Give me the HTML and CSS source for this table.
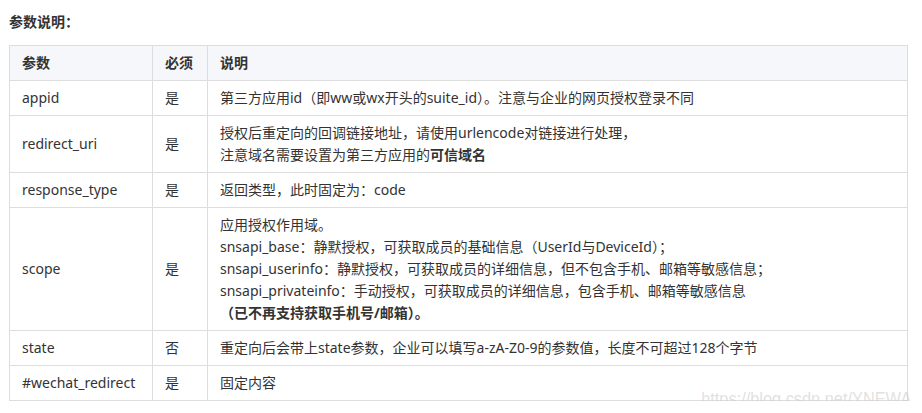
FILE: index.html
```html
<!DOCTYPE html>
<html lang="zh-CN">
<head>
<meta charset="utf-8">
<link rel="stylesheet" href="styles.css">
</head>
<body>
<div class="page">
  <p class="title">参数说明：</p>
  <div class="table-wrap">
    <table class="params">
      <colgroup>
        <col class="c1"><col class="c2"><col class="c3">
      </colgroup>
      <thead>
        <tr><th>参数</th><th>必须</th><th>说明</th></tr>
      </thead>
      <tbody>
        <tr><td>appid</td><td>是</td><td>第三方应用id（即ww或wx开头的suite_id）。注意与企业的网页授权登录不同</td></tr>
        <tr><td>redirect_uri</td><td>是</td><td>授权后重定向的回调链接地址，请使用urlencode对链接进行处理，<br>注意域名需要设置为第三方应用的<b>可信域名</b></td></tr>
        <tr><td>response_type</td><td>是</td><td>返回类型，此时固定为：code</td></tr>
        <tr><td>scope</td><td>是</td><td>应用授权作用域。<br>snsapi_base：静默授权，可获取成员的基础信息（UserId与DeviceId）；<br>snsapi_userinfo：静默授权，可获取成员的详细信息，但不包含手机、邮箱等敏感信息；<br>snsapi_privateinfo：手动授权，可获取成员的详细信息，包含手机、邮箱等敏感信息<br><b>（已不再支持获取手机号/邮箱）。</b></td></tr>
        <tr><td>state</td><td>否</td><td>重定向后会带上state参数，企业可以填写a-zA-Z0-9的参数值，长度不可超过128个字节</td></tr>
        <tr><td>#wechat_redirect</td><td>是</td><td>固定内容</td></tr>
      </tbody>
    </table>
    <div class="watermark">https://blog.csdn.net/YNEWA</div>
  </div>
</div>
</body>
</html>
```

FILE: styles.css
```css
html, body {
  margin: 0;
  padding: 0;
  background: #ffffff;
}
body {
  font-family: "Noto Sans", "Noto Sans CJK SC", sans-serif;
  font-size: 14px;
  color: #333333;
}
.page {
  padding: 9px 14px 0 9px;
}
.title {
  margin: 0;
  height: 36px;
  line-height: 26px;
  font-weight: bold;
  font-size: 14px;
  color: #333;
}
.table-wrap {
  position: relative;
  width: 899px;
}
.params {
  border-collapse: collapse;
  table-layout: fixed;
  width: 899px;
}
.c1 { width: 143px; }
.c2 { width: 55px; }
.params th,
.params td {
  border: 1px solid #dddddd;
  padding: 6px 12px;
  line-height: 22px;
  text-align: left;
  vertical-align: middle;
  white-space: nowrap;
}
.params th {
  background: #f6f7fb;
  font-weight: bold;
  color: #333;
}
.params b {
  font-weight: bold;
}
.watermark {
  position: absolute;
  right: -3px;
  bottom: -9px;
  font-family: "Liberation Sans", Arial, sans-serif;
  font-size: 19px;
  color: rgba(200, 200, 200, 0.55);
  transform: scaleX(0.86);
  transform-origin: right bottom;
  white-space: nowrap;
  pointer-events: none;
}
```
